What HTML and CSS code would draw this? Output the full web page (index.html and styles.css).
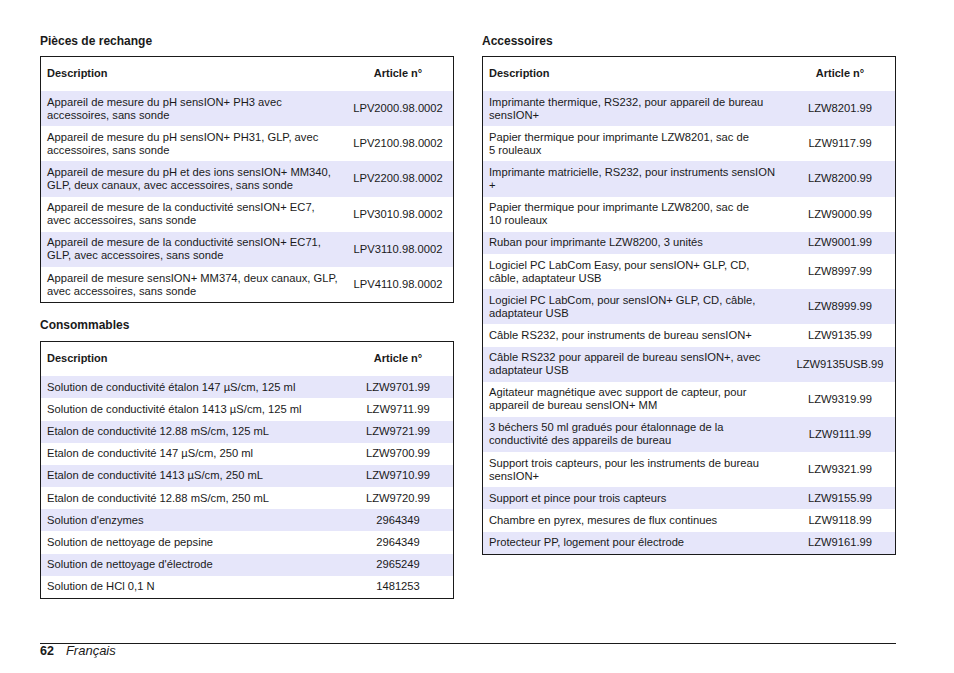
FILE: index.html
```html
<!DOCTYPE html>
<html lang="fr">
<head>
<meta charset="utf-8">
<title>Pièces de rechange</title>
<link rel="stylesheet" href="styles.css">
</head>
<body>
<div class="page">
  <div class="columns">
    <div class="col">
      <h2 class="title">Pièces de rechange</h2>
      <table class="parts">
        <colgroup><col class="c-desc"><col class="c-num"></colgroup>
        <thead><tr><th class="desc">Description</th><th class="num">Article n°</th></tr></thead>
        <tbody>
          <tr><td class="desc">Appareil de mesure du pH sensION+ PH3 avec<br>accessoires, sans sonde</td><td class="num">LPV2000.98.0002</td></tr>
          <tr><td class="desc">Appareil de mesure du pH sensION+ PH31, GLP, avec<br>accessoires, sans sonde</td><td class="num">LPV2100.98.0002</td></tr>
          <tr><td class="desc">Appareil de mesure du pH et des ions sensION+ MM340,<br>GLP, deux canaux, avec accessoires, sans sonde</td><td class="num">LPV2200.98.0002</td></tr>
          <tr><td class="desc">Appareil de mesure de la conductivité sensION+ EC7,<br>avec accessoires, sans sonde</td><td class="num">LPV3010.98.0002</td></tr>
          <tr><td class="desc">Appareil de mesure de la conductivité sensION+ EC71,<br>GLP, avec accessoires, sans sonde</td><td class="num">LPV3110.98.0002</td></tr>
          <tr><td class="desc">Appareil de mesure sensION+ MM374, deux canaux, GLP,<br>avec accessoires, sans sonde</td><td class="num">LPV4110.98.0002</td></tr>
        </tbody>
      </table>

      <h2 class="title second">Consommables</h2>
      <table class="parts">
        <colgroup><col class="c-desc"><col class="c-num"></colgroup>
        <thead><tr><th class="desc">Description</th><th class="num">Article n°</th></tr></thead>
        <tbody>
          <tr><td class="desc">Solution de conductivité étalon 147 µS/cm, 125 ml</td><td class="num">LZW9701.99</td></tr>
          <tr><td class="desc">Solution de conductivité étalon 1413 µS/cm, 125 ml</td><td class="num">LZW9711.99</td></tr>
          <tr><td class="desc">Etalon de conductivité 12.88 mS/cm, 125 mL</td><td class="num">LZW9721.99</td></tr>
          <tr><td class="desc">Etalon de conductivité 147 µS/cm, 250 ml</td><td class="num">LZW9700.99</td></tr>
          <tr><td class="desc">Etalon de conductivité 1413 µS/cm, 250 mL</td><td class="num">LZW9710.99</td></tr>
          <tr><td class="desc">Etalon de conductivité 12.88 mS/cm, 250 mL</td><td class="num">LZW9720.99</td></tr>
          <tr><td class="desc">Solution d'enzymes</td><td class="num">2964349</td></tr>
          <tr><td class="desc">Solution de nettoyage de pepsine</td><td class="num">2964349</td></tr>
          <tr><td class="desc">Solution de nettoyage d'électrode</td><td class="num">2965249</td></tr>
          <tr><td class="desc">Solution de HCl 0,1 N</td><td class="num">1481253</td></tr>
        </tbody>
      </table>
    </div>

    <div class="col">
      <h2 class="title">Accessoires</h2>
      <table class="parts">
        <colgroup><col class="c-desc"><col class="c-num"></colgroup>
        <thead><tr><th class="desc">Description</th><th class="num">Article n°</th></tr></thead>
        <tbody>
          <tr><td class="desc">Imprimante thermique, RS232, pour appareil de bureau<br>sensION+</td><td class="num">LZW8201.99</td></tr>
          <tr><td class="desc">Papier thermique pour imprimante LZW8201, sac de<br>5 rouleaux</td><td class="num">LZW9117.99</td></tr>
          <tr><td class="desc">Imprimante matricielle, RS232, pour instruments sensION<br>+</td><td class="num">LZW8200.99</td></tr>
          <tr><td class="desc">Papier thermique pour imprimante LZW8200, sac de<br>10 rouleaux</td><td class="num">LZW9000.99</td></tr>
          <tr><td class="desc">Ruban pour imprimante LZW8200, 3 unités</td><td class="num">LZW9001.99</td></tr>
          <tr><td class="desc">Logiciel PC LabCom Easy, pour sensION+ GLP, CD,<br>câble, adaptateur USB</td><td class="num">LZW8997.99</td></tr>
          <tr><td class="desc">Logiciel PC LabCom, pour sensION+ GLP, CD, câble,<br>adaptateur USB</td><td class="num">LZW8999.99</td></tr>
          <tr><td class="desc">Câble RS232, pour instruments de bureau sensION+</td><td class="num">LZW9135.99</td></tr>
          <tr><td class="desc">Câble RS232 pour appareil de bureau sensION+, avec<br>adaptateur USB</td><td class="num">LZW9135USB.99</td></tr>
          <tr><td class="desc">Agitateur magnétique avec support de capteur, pour<br>appareil de bureau sensION+ MM</td><td class="num">LZW9319.99</td></tr>
          <tr><td class="desc">3 béchers 50 ml gradués pour étalonnage de la<br>conductivité des appareils de bureau</td><td class="num">LZW9111.99</td></tr>
          <tr><td class="desc">Support trois capteurs, pour les instruments de bureau<br>sensION+</td><td class="num">LZW9321.99</td></tr>
          <tr><td class="desc">Support et pince pour trois capteurs</td><td class="num">LZW9155.99</td></tr>
          <tr><td class="desc">Chambre en pyrex, mesures de flux continues</td><td class="num">LZW9118.99</td></tr>
          <tr><td class="desc">Protecteur PP, logement pour électrode</td><td class="num">LZW9161.99</td></tr>
        </tbody>
      </table>
    </div>
  </div>

  <footer class="footer">
    <span class="page-no">62</span>
    <span class="lang">Français</span>
  </footer>
</div>
</body>
</html>
```

FILE: styles.css
```css
* { box-sizing: border-box; }

html, body {
  margin: 0;
  padding: 0;
  background: #ffffff;
}

body {
  font-family: "Liberation Sans", Arial, sans-serif;
  color: #1a1a1a;
}

.page {
  width: 954px;
  height: 673px;
  padding: 34px 58px 0 40px;
  display: flex;
  flex-direction: column;
}

.columns {
  display: flex;
  gap: 28px;
  height: 609px;
}

.col {
  width: 414px;
}

.title {
  margin: 0 0 7px 0;
  font-size: 12px;
  font-weight: bold;
  line-height: 15px;
}

.title.second {
  margin-top: 15px;
  margin-bottom: 8px;
}

.parts {
  width: 414px;
  table-layout: fixed;
  border-collapse: separate;
  border-spacing: 0;
  border: 1px solid #1a1a1a;
  font-size: 11.2px;
  line-height: 13px;
}

.c-desc { width: 302px; }
.c-num { width: 110px; }

.parts th {
  font-weight: bold;
  font-size: 11px;
  padding: 10px 6px;
  vertical-align: middle;
  background: #ffffff;
  border-bottom: 1px solid #ffffff;
}

.parts td {
  padding: 4.6px 1px 4.6px 6px;
  vertical-align: middle;
}

.parts .desc { text-align: left; }
.parts .num { text-align: center; padding-left: 2px; padding-right: 2px; }

.parts tbody tr:nth-child(odd) td {
  background: #e6e6fa;
}

.footer {
  border-top: 1px solid #1a1a1a;
  padding-top: 0;
  display: flex;
  align-items: baseline;
  gap: 12px;
  font-size: 12.5px;
  line-height: 14px;
}

.page-no {
  font-weight: bold;
}

.lang {
  font-style: italic;
  font-size: 13px;
}
```
